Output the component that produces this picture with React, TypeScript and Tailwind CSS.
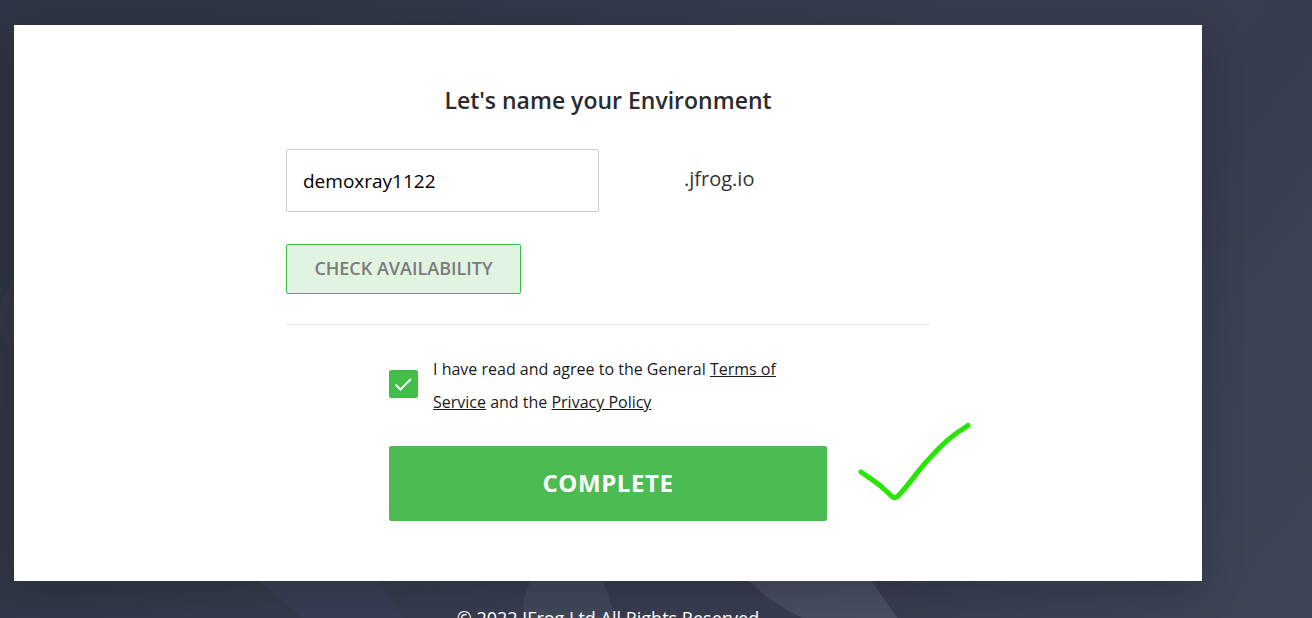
import { useState } from "react";

function Backdrop() {
  return (
    <svg
      aria-hidden="true"
      className="absolute top-0 left-0 h-screen w-full"
      viewBox="0 0 1312 618"
      preserveAspectRatio="none"
    >
      <defs>
        <linearGradient id="base" gradientUnits="userSpaceOnUse" x1="200" y1="0" x2="1300" y2="856">
          <stop offset="0" stopColor="#2f3544" />
          <stop offset="0.18" stopColor="#323848" />
          <stop offset="0.42" stopColor="#373d4f" />
          <stop offset="0.65" stopColor="#383c50" />
          <stop offset="0.72" stopColor="#394152" />
          <stop offset="0.82" stopColor="#3b4355" />
          <stop offset="0.88" stopColor="#404457" />
          <stop offset="1" stopColor="#414558" />
        </linearGradient>
        <linearGradient id="swoosh" x1="0" y1="0" x2="1" y2="1">
          <stop offset="0" stopColor="#46495d" />
          <stop offset="1" stopColor="#495165" />
        </linearGradient>
      </defs>
      <rect width="1312" height="618" fill="url(#base)" />
      <circle cx="42" cy="318" r="44" fill="#333848" />
      <path d="M254 576 L376 576 L404 618 L302 618 Z" fill="#393e55" />
      <path d="M538 570 Q520 594 524 618 L614 618 Q610 594 598 570 Z" fill="#404859" />
      <path d="M738 570 Q768 604 812 622 L900 622 L864 570 Z" fill="url(#swoosh)" />
    </svg>
  );
}

function CheckMark() {
  return (
    <svg
      aria-hidden="true"
      viewBox="0 0 29 28"
      className="pointer-events-none absolute inset-0 h-full w-full"
    >
      <path d="M6.500 14.500 L11.500 19.500 L21.800 9" fill="none" stroke="#fff" strokeWidth="2" />
    </svg>
  );
}

export default function App() {
  const [name, setName] = useState("demoxray1122");
  const [agreed, setAgreed] = useState(true);

  return (
    <div className="relative min-h-screen overflow-hidden bg-[#343a4b] pt-[25px] pr-[110px] pl-[14px] font-['Open_Sans',sans-serif]">
      <Backdrop />
      <main className="relative bg-white px-6 py-[60px] shadow-[0_10px_40px_rgba(0,0,0,0.2)]">
        <form className="mx-auto max-w-[644px]" onSubmit={(e) => e.preventDefault()}>
          <h1 className="pb-0.5 text-center text-[23px] leading-[30px] font-semibold text-[#2b2b2f]">
            Let's name your Environment
          </h1>

          <div className="mt-8 flex items-center">
            <input
              type="text"
              aria-label="Environment name"
              value={name}
              onChange={(e) => setName(e.target.value)}
              className="h-[63px] w-[313px] rounded-xs border border-[#cccccc] bg-white px-4 text-[19px] text-black outline-none"
            />
            <span className="ml-[85px] pb-1 text-xl text-[#333333]">.jfrog.io</span>
          </div>

          <button
            type="button"
            className="mt-8 block h-[50px] w-[235px] rounded-xs border border-[#40be46] bg-[#e1f3e1] pb-0.5 text-lg font-semibold text-[#7b7b7b]"
          >
            CHECK AVAILABILITY
          </button>

          <hr className="mt-[30px] border-[#e6e6e6]" />

          <div className="relative mx-auto mt-7 max-w-[438px]">
            <div className="flex items-start gap-[15px]">
              <span className="relative mt-[17px] h-7 w-[29px] shrink-0">
                <input
                  id="agree"
                  type="checkbox"
                  checked={agreed}
                  onChange={(e) => setAgreed(e.target.checked)}
                  className="block h-full w-full appearance-none rounded-xs border border-[#40be46] bg-white checked:bg-[#40be46]"
                />
                {agreed && <CheckMark />}
              </span>
              <label htmlFor="agree" className="text-base leading-[33px] text-[#1a1a1a]">
                I have read and agree to the General{" "}
                <a href="#terms" className="text-[#1a1a1a] underline">
                  Terms of Service
                </a>{" "}
                and the{" "}
                <a href="#privacy" className="text-[#1a1a1a] underline">
                  Privacy Policy
                </a>
              </label>
            </div>

            <button
              type="submit"
              className="mt-[27px] block h-[75px] w-full rounded-xs bg-[#4cbb51] pb-0.5 text-2xl font-bold tracking-wide text-white"
            >
              COMPLETE
            </button>

            <svg
              aria-hidden="true"
              viewBox="0 0 120 84"
              className="absolute -right-[148px] bottom-[16px] h-[84px] w-[120px]"
            >
              <path
                d="M6 51 C13 56 23 62 29 68 L37 75.500 Q40 78 43 75 C53 65 61 52 73 39 C81 30 91 20 99 14 C104 10 109 7.500 113 4.500"
                fill="none"
                stroke="#26e600"
                strokeWidth="5"
                strokeLinecap="round"
                strokeLinejoin="round"
              />
            </svg>
          </div>
        </form>
      </main>
      <footer className="relative mt-[23px] text-center text-lg leading-7 text-white">
        © 2022 JFrog Ltd All Rights Reserved
      </footer>
    </div>
  );
}
